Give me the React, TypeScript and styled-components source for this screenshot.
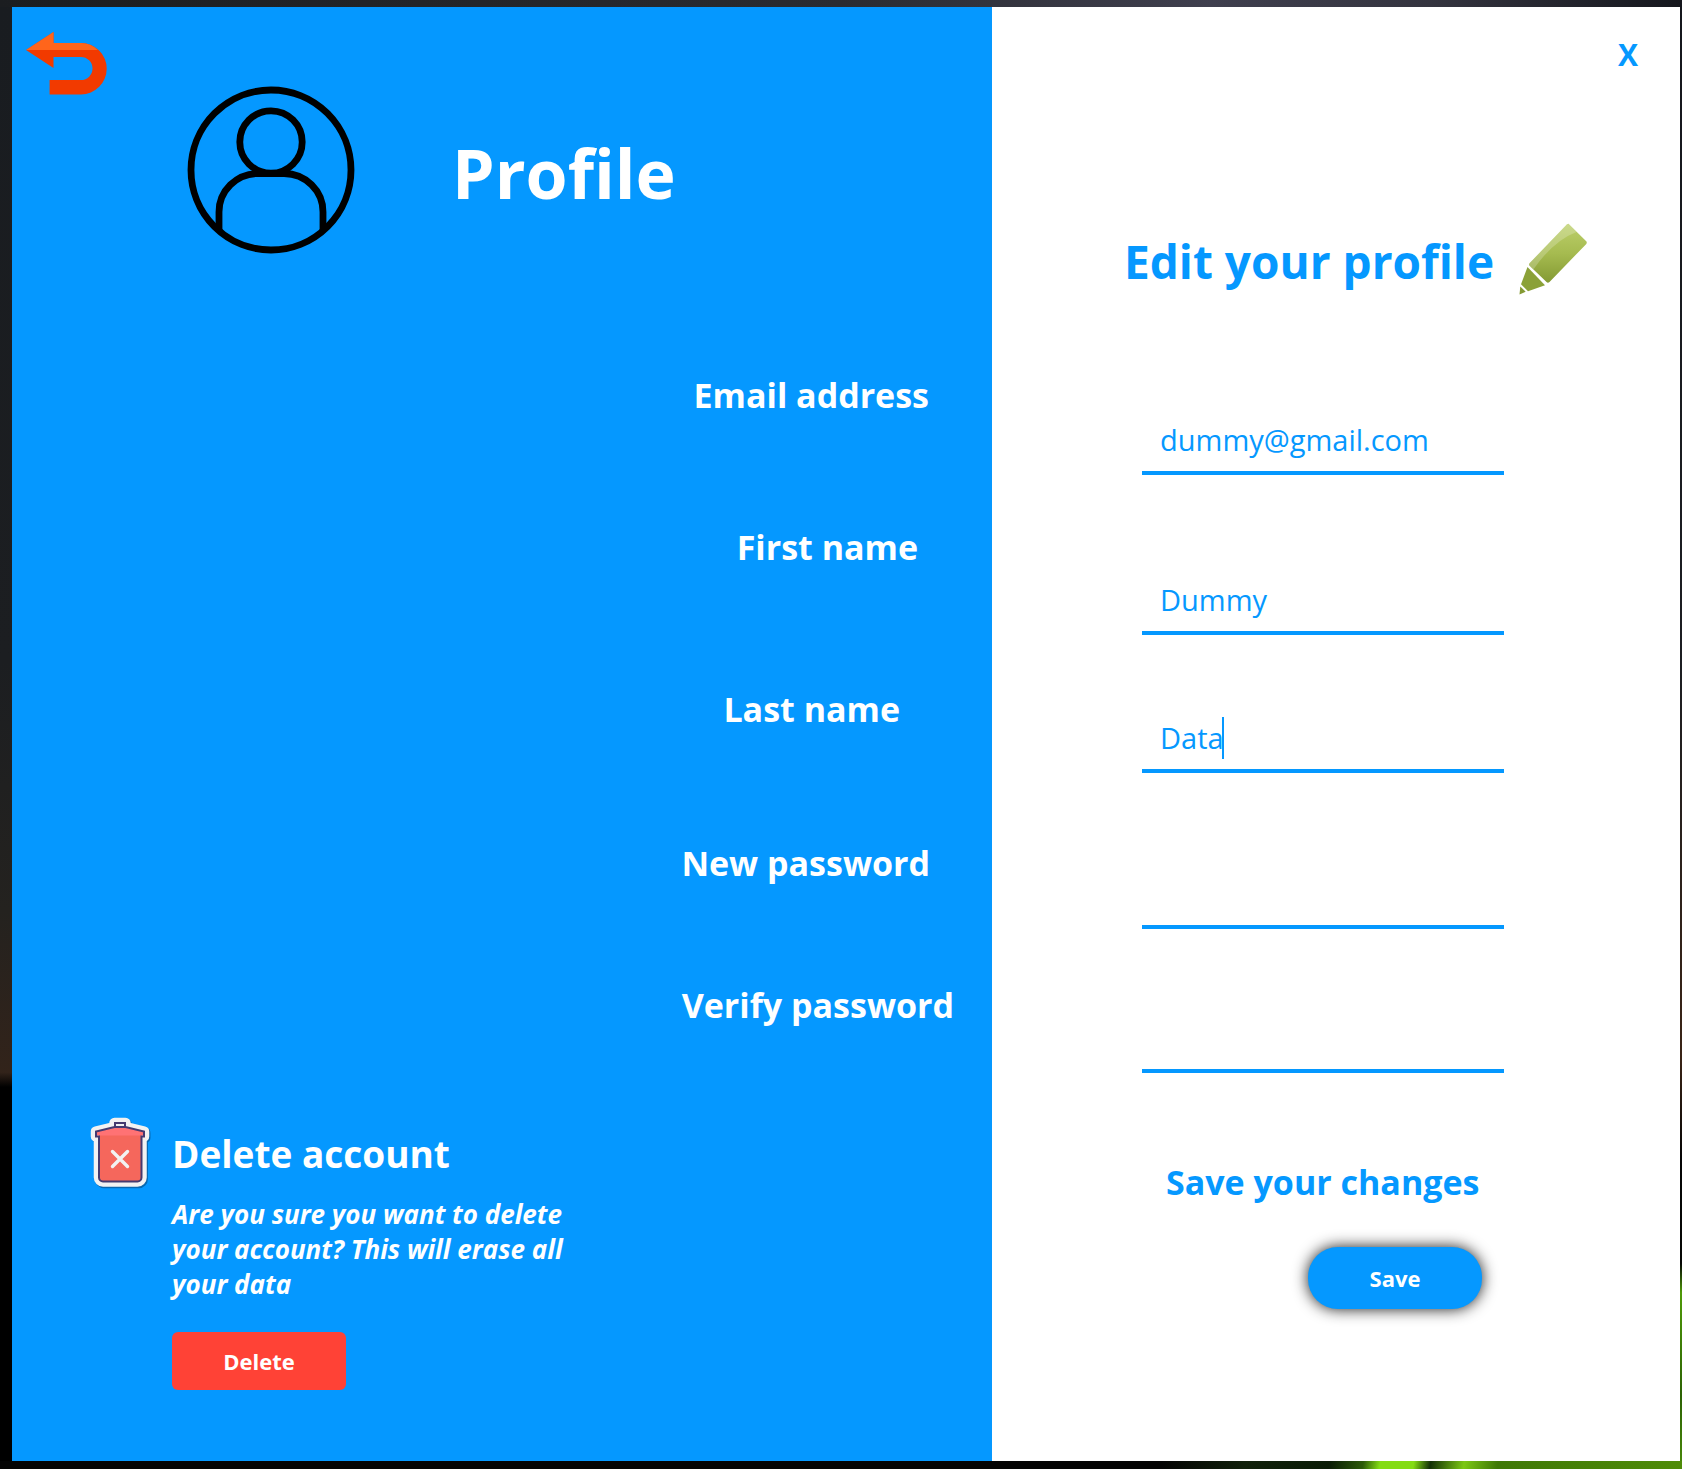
import React, { useState } from "react";
import styled, { createGlobalStyle, css } from "styled-components";

const BLUE = "#0598ff";
const FONT = `"Open Sans", "Noto Sans", sans-serif`;

const GlobalStyle = createGlobalStyle`
  *, *::before, *::after { box-sizing: border-box; }
  body { margin: 0; background: #000; font-family: ${FONT}; }
  h1, h2, p { margin: 0; }
  button, input { font-family: inherit; }
`;

const topEdge = `linear-gradient(90deg, #1b1d20 0%, #232428 25%, #2a2b31 50%, #3f3f4e 72%, #34343f 85%, #15171d 100%)`;
const leftEdge = `linear-gradient(180deg, #191c20 0%, #1c1e21 45%, #24221f 62%, #32231a 73%, #000 74%, #000 100%)`;
const rightEdge = `linear-gradient(180deg, #15171d 0%, #1c1e22 45%, #3a2416 72%, #050505 79%, #060805 86%, #4f9a08 88%, #2c6204 95%, #4a8a0a 100%)`;
const bottomEdge = `linear-gradient(100deg, #040404 0%, #040404 69%, #10200a 74%, #0a1c06 79%, #2c5a08 81%, #84dc14 82%, #84dc14 84%, #123006 85%, #7cc814 87%, #3f7806 89%, #4f8c08 100%)`;

const Desktop = styled.div`
  display: flex;
  min-height: 100vh;
  padding: 7px 2px 8px 12px;
  background:
    ${topEdge} top / 100% 7px no-repeat,
    ${bottomEdge} bottom / 100% 8px no-repeat,
    ${leftEdge} left / 12px 100% no-repeat,
    ${rightEdge} right / 2px 100% no-repeat;
`;

const ProfileWindow = styled.form`
  flex: 1;
  display: grid;
  grid-template-columns: 980fr 688fr;
`;

const SummaryPanel = styled.section`
  display: flex;
  flex-direction: column;
  background: ${BLUE};
  color: #fff;
`;

const EditPanel = styled.section`
  display: flex;
  flex-direction: column;
  background: #fff;
  color: ${BLUE};
`;

const Header = styled.header`
  display: flex;
  align-items: flex-start;
  padding: 24px 14px 0;
`;

const IconButton = styled.button`
  display: block;
  padding: 0;
  border: 0;
  background: none;
  color: inherit;
  cursor: pointer;
`;

const Avatar = styled.svg`
  margin: 55px 0 0 79px;
`;

const Title = styled.h1`
  margin: 97px 0 0 97px;
  font-size: 68px;
  line-height: 90px;
  font-weight: 700;
`;

const LabelList = styled.div`
  display: flex;
  flex-direction: column;
  align-items: flex-end;
  padding-top: 119px;
`;

const FieldLabel = styled.label<{ $inset: number; $gap: number }>`
  margin: 0 ${(p) => p.$inset}px ${(p) => p.$gap}px 0;
  font-size: 34px;
  line-height: 44px;
  font-weight: 700;
`;

const DeleteSection = styled.div`
  display: grid;
  grid-template-columns: 66px 420px;
  column-gap: 16px;
  padding: 89px 0 60px 78px;
`;

const DeleteBody = styled.div`
  display: flex;
  flex-direction: column;
  align-items: flex-start;
  padding-top: 14px;
`;

const SectionTitle = styled.h2<{ $size: number }>`
  font-size: ${(p) => p.$size}px;
  line-height: 48px;
  font-weight: 700;
`;

const Warning = styled.p`
  margin-top: 19px;
  font-size: 26px;
  line-height: 35px;
  font-weight: 700;
  font-style: italic;
`;

const actionButton = css`
  width: 174px;
  border: 0;
  padding: 0;
  color: #fff;
  font-size: 22px;
  line-height: 30px;
  font-weight: 700;
  cursor: pointer;
`;

const DeleteButton = styled.button`
  ${actionButton}
  height: 58px;
  margin-top: 30px;
  border-radius: 6px;
  background: #ff4236;
`;

const SaveButton = styled.button`
  ${actionButton}
  height: 62px;
  border-radius: 30px;
  background: ${BLUE};
  box-shadow: 0 0 15px rgba(0, 0, 0, 0.9);
`;

const CloseButton = styled(IconButton)`
  align-self: flex-end;
  margin: 28px 42px 0 0;
  font-size: 30px;
  line-height: 40px;
  font-weight: 700;
`;

const EditHeading = styled.div`
  display: flex;
  align-items: flex-start;
  gap: 24px;
  padding: 148px 0 0 132px;
`;

const EditTitle = styled.h2`
  font-size: 46px;
  line-height: 76px;
  font-weight: 700;
`;

const FormColumn = styled.div`
  width: 362px;
  margin-left: 150px;
  padding-top: 110px;
`;

const Field = styled.div<{ $gap: number }>`
  position: relative;
  margin-bottom: ${(p) => p.$gap}px;
`;

const TextInput = styled.input`
  display: block;
  width: 100%;
  height: 66px;
  padding: 0 18px 2px;
  border: 0;
  border-bottom: 4px solid ${BLUE};
  border-radius: 0;
  outline: 0;
  background: transparent;
  color: ${BLUE};
  caret-color: transparent;
  font-size: 29px;
`;

const Caret = styled.span`
  position: absolute;
  top: 10px;
  left: 80px;
  width: 2px;
  height: 42px;
  background: ${BLUE};
`;

const SaveSection = styled.div`
  display: flex;
  flex-direction: column;
  gap: 41px;
  padding: 85px 22px 60px 24px;
`;

const SaveRow = styled.div`
  display: flex;
  justify-content: flex-end;
`;

const BackIcon = () => (
  <svg width="82" height="64" viewBox="26 31 82 64" aria-hidden="true" display="block">
    <path d="M26 50 53.500 32V43H81a25.700 25.700 0 0 1 0 51.400H49.600V80H81a11.500 11.500 0 0 0 0-23H53.500V68Z" fill="#f23a00" />
    <path d="M26 50 53.500 32V43H81a25.700 25.700 0 0 1 17 7Z" fill="#ff651b" />
  </svg>
);

const AvatarIcon = () => (
  <Avatar width="168" height="168" viewBox="187 86 168 168" fill="none" stroke="#000" strokeWidth="6.800" aria-hidden="true">
    <circle cx="271" cy="170" r="80" />
    <circle cx="271" cy="142" r="31.200" />
    <path d="M219 230V212A39 38.500 0 0 1 258 173.500H284A39 38.500 0 0 1 323 212V230" />
  </Avatar>
);

const PencilIcon = () => (
  <svg width="70" height="72" viewBox="1518.500 222.500 70 72" aria-hidden="true">
    <defs>
      <linearGradient id="pencil" x1="0" y1="0" x2="0" y2="1">
        <stop offset="0" stopColor="#bccf6a" />
        <stop offset=".5" stopColor="#a6bb50" />
        <stop offset="1" stopColor="#849a33" />
      </linearGradient>
    </defs>
    <path d="M1569 223.300 1587 241Q1587.600 242.200 1586.800 243.400L1550 281.500Q1548.400 283 1547 281.600L1529.800 265Q1529 264 1530 262.800L1567.500 223.700Z" fill="url(#pencil)" />
    <path d="M1569 223.300 1577 231.400Q1554 240 1534 268.800L1529.800 265Q1529 264 1530 262.800L1567.500 223.700Z" fill="#fff" opacity=".22" />
    <path d="M1528 266.500 1545.500 284.800 1528.500 290.700 1521.500 283.800Z" fill="#8ba138" />
    <path d="M1520.800 286 1526.200 291.300 1520 294Z" fill="#849a33" />
  </svg>
);

const CAN = "M16 21.500 34.500 17V13H45.500V17L64 21.500V26.500H61.500V67.500A4 4 0 0 1 57.500 71.500H23A4 4 0 0 1 19 67.500V26.500H16Z";

const TrashIcon = () => (
  <svg width="66" height="76" viewBox="10 6 66 76" aria-hidden="true">
    <path d={CAN} transform="translate(1.200 1.400)" fill="#0b5590" stroke="#0b5590" strokeWidth="10.500" strokeLinejoin="round" opacity=".7" />
    <path d={CAN} fill="#f2f2f2" stroke="#f2f2f2" strokeWidth="10.500" strokeLinejoin="round" />
    <path d="M19 22H61.500V67.500A4 4 0 0 1 57.500 71.500H23A4 4 0 0 1 19 67.500Z" fill="#f5675c" />
    <path d="M16 21.500 35 17.500H45L64 21.500V25.500H16Z" fill="#ff7274" />
    <path d="M19 26.500H16V21.500L34.500 17H45.500L64 21.500V26.500H61.500V67.500A4 4 0 0 1 57.500 71.500H23A4 4 0 0 1 19 67.500ZM35 17V13H45V17" fill="none" stroke="#453a70" strokeWidth="2" />
    <path d="M32.500 41.500 47.500 56.500M47.500 41.500 32.500 56.500" stroke="#f2f2f2" strokeWidth="3.400" strokeLinecap="round" />
  </svg>
);

interface FieldSpec {
  id: string;
  label: string;
  type: string;
  value: string;
  inset: number;
  labelGap: number;
  inputGap: number;
}

const FIELDS: FieldSpec[] = [
  { id: "email", label: "Email address", type: "text", value: "dummy@gmail.com", inset: 63, labelGap: 108, inputGap: 94 },
  { id: "first", label: "First name", type: "text", value: "Dummy", inset: 74, labelGap: 118, inputGap: 72 },
  { id: "last", label: "Last name", type: "text", value: "Data", inset: 92, labelGap: 110, inputGap: 90 },
  { id: "password", label: "New password", type: "password", value: "", inset: 62, labelGap: 98, inputGap: 78 },
  { id: "verify", label: "Verify password", type: "password", value: "", inset: 38, labelGap: 0, inputGap: 0 },
];

export default function App() {
  const [values, setValues] = useState<Record<string, string>>(
    Object.fromEntries(FIELDS.map((f) => [f.id, f.value]))
  );

  return (
    <>
      <GlobalStyle />
      <Desktop>
        <ProfileWindow onSubmit={(e) => e.preventDefault()}>
          <SummaryPanel>
            <Header>
              <IconButton type="button" aria-label="Back">
                <BackIcon />
              </IconButton>
              <AvatarIcon />
              <Title>Profile</Title>
            </Header>
            <LabelList>
              {FIELDS.map((f) => (
                <FieldLabel key={f.id} htmlFor={f.id} $inset={f.inset} $gap={f.labelGap}>
                  {f.label}
                </FieldLabel>
              ))}
            </LabelList>
            <DeleteSection>
              <TrashIcon />
              <DeleteBody>
                <SectionTitle $size={37}>Delete account</SectionTitle>
                <Warning>Are you sure you want to delete your account? This will erase all your data</Warning>
                <DeleteButton type="button">Delete</DeleteButton>
              </DeleteBody>
            </DeleteSection>
          </SummaryPanel>
          <EditPanel>
            <CloseButton type="button">X</CloseButton>
            <EditHeading>
              <EditTitle>Edit your profile</EditTitle>
              <PencilIcon />
            </EditHeading>
            <FormColumn>
              {FIELDS.map((f) => (
                <Field key={f.id} $gap={f.inputGap}>
                  <TextInput
                    id={f.id}
                    type={f.type}
                    value={values[f.id]}
                    onChange={(e) => setValues({ ...values, [f.id]: e.target.value })}
                  />
                  {f.id === "last" && <Caret />}
                </Field>
              ))}
              <SaveSection>
                <SectionTitle $size={34}>Save your changes</SectionTitle>
                <SaveRow>
                  <SaveButton type="submit">Save</SaveButton>
                </SaveRow>
              </SaveSection>
            </FormColumn>
          </EditPanel>
        </ProfileWindow>
      </Desktop>
    </>
  );
}
